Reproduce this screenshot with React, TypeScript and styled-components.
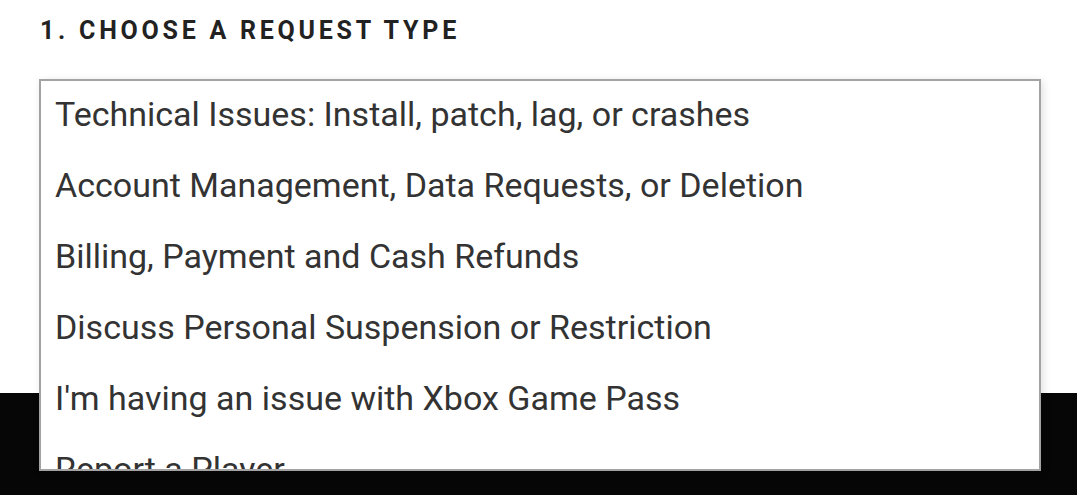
import React from "react";
import styled, { createGlobalStyle } from "styled-components";

const Global = createGlobalStyle`
  html, body { margin: 0; padding: 0; background: #ffffff; }
  body { font-family: Roboto, "Liberation Sans", Arial, sans-serif; overflow: hidden; }
`;

const Page = styled.div`
  width: 1077px;
  height: 495px;
  display: flex;
  flex-direction: column;
  background: #ffffff;
`;

const Section = styled.section`
  height: 393px;
  padding: 17px 0 0 40px;
  box-sizing: border-box;
`;

const Heading = styled.h2`
  margin: 0;
  font-size: 25px;
  line-height: 28px;
  font-weight: 700;
  letter-spacing: 3.75px;
  color: #222222;
  text-transform: uppercase;
`;

const SelectWrap = styled.div`
  position: relative;
  margin-top: 34px;
  margin-left: -1px;
  width: 1002px;
`;

const Listbox = styled.ul`
  position: absolute;
  top: 0;
  left: 0;
  z-index: 2;
  width: 1002px;
  height: 392px;
  box-sizing: border-box;
  margin: 0;
  padding: 0;
  list-style: none;
  background: #ffffff;
  border: 2px solid #a3a3a3;
  box-shadow: 2px 2px 8px rgba(0, 0, 0, 0.12);
  overflow: hidden;
`;

const Option = styled.li<{ $first?: boolean }>`
  margin-top: ${(p) => (p.$first ? "-2px" : "0")};
  padding: 0 14px;
  font-size: 34px;
  line-height: 71px;
  height: 71px;
  color: #333333;
  white-space: nowrap;
`;

const Footer = styled.footer`
  flex: 1;
  background: #060606;
`;

const options = [
  "Technical Issues: Install, patch, lag, or crashes",
  "Account Management, Data Requests, or Deletion",
  "Billing, Payment and Cash Refunds",
  "Discuss Personal Suspension or Restriction",
  "I'm having an issue with Xbox Game Pass",
  "Report a Player",
  "Other",
];

export default function App() {
  return (
    <Page>
      <Global />
      <Section>
        <Heading>1. Choose a request type</Heading>
        <SelectWrap>
          <Listbox role="listbox">
            {options.map((o, i) => (
              <Option key={o} $first={i === 0} role="option">
                {o}
              </Option>
            ))}
          </Listbox>
        </SelectWrap>
      </Section>
      <Footer />
    </Page>
  );
}
